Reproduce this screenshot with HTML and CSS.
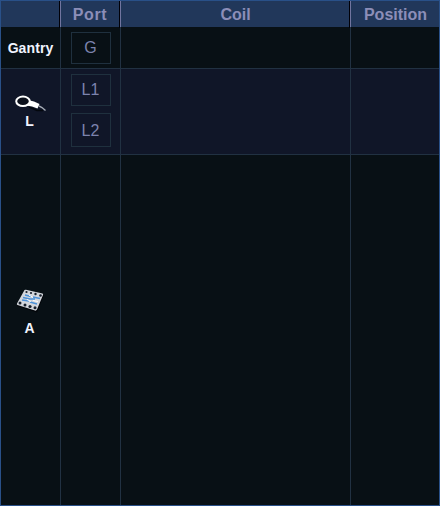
FILE: index.html
```html
<!DOCTYPE html>
<html lang="en">
<head>
<meta charset="utf-8">
<title>Coil ports</title>
<link rel="stylesheet" href="styles.css">
</head>
<body>
<main class="table">
  <div class="row header">
    <div></div><div class="short">Port</div><div>Coil</div><div>Position</div>
  </div>
  <div class="row gantry">
    <div class="label">Gantry</div>
    <div class="ports"><span class="port">G</span></div>
    <div></div><div></div>
  </div>
  <div class="row local">
    <div class="label">
      <svg class="icon" width="34" height="20" viewBox="0 0 34 20">
        <path d="M17 14 L25 17.5 L31 17.5" fill="none" stroke="#03070d" stroke-width="1.5"/>
        <path d="M16 7 L22 8.5 L27.5 11 L25.5 15.5 L20 13.5 L14 12.5Z" fill="#fff"/>
        <ellipse cx="11" cy="8.3" rx="6.8" ry="4.7" fill="#0b101b" stroke="#fff" stroke-width="2"/>
        <path d="M27 13 L30 14.5 L33.5 17.5" fill="none" stroke="#a5abb5" stroke-width="1.4"/>
      </svg>
      <span>L</span>
    </div>
    <div class="ports"><span class="port">L1</span><span class="port tall">L2</span></div>
    <div></div><div></div>
  </div>
  <div class="row array">
    <div class="label">
      <svg class="icon" width="30" height="24" viewBox="0 0 30 24">
        <path d="M9 2 L29 6 L22 23.5 L2 17Z" fill="#03060a"/>
        <path d="M9.5 1 Q10 .5 11 .7 L27.5 4.5 Q28.5 5 28 6 L22 20.5 Q21 22 20 21.5 L2.5 16 Q1.500 15.500 2 14.500Z" fill="#d3d6dc"/>
        <g fill="#18202c">
          <circle cx="11.500" cy="3" r="1.100"/><circle cx="16" cy="4" r="1.100"/><circle cx="20.500" cy="5" r="1.200"/><circle cx="25.500" cy="6.500" r="1.300"/>
          <circle cx="5" cy="14" r="1.500"/><circle cx="10" cy="16" r="1.500"/><circle cx="15" cy="17.500" r="1.600"/><circle cx="20" cy="18.800" r="1.500"/>
        </g>
        <path d="M10 6 L16 7.500 M18 8 L25 9.500 M8 8.500 L15 10 L20 10 M7 11 L14 12 M15 13 L22 15" fill="none" stroke="#4c91d8" stroke-width="1.500"/>
        <path d="M14 6 L18 8.500 M18 11.500 L23 12.500 M12 10.500 L16 12.500" stroke="#fff"/>
      </svg>
      <span>A</span>
    </div>
    <div></div><div></div><div></div>
  </div>
</main>
</body>
</html>
```
FILE: styles.css
```css
* { box-sizing: border-box; }

body {
  margin: 0;
  background: #081015;
  font-family: "Liberation Sans", Arial, sans-serif;
}

.table {
  display: grid;
  grid-template-rows: 26px 42px 86px 1fr;
  width: 440px;
  height: 506px;
  border: 1px solid #295088;
  background: #081015;
}

.row {
  display: grid;
  grid-template-columns: 59px 60px 230px 1fr;
  border-bottom: 1px solid #213142;
}

.row > div + div { border-left: 1px solid #213142; }

.header {
  border-bottom: 0;
  background: #21375a;
  color: #8c8eb8;
  font-size: 16px;
  font-weight: bold;
  line-height: 27px;
  text-align: center;
}

.header > div { padding-left: 1px; }
.header > .short { letter-spacing: 0.6px; padding-left: 0; }
.header > div:not(:last-child) { border-right: 1px solid #000008; }
.row.header > div + div { border-left-color: #71759f; }

.local { background: #101628; }
.array { border-bottom: 0; }

.label {
  display: flex;
  flex-direction: column;
  align-items: center;
  justify-content: center;
  color: #f0f4ff;
  font-size: 14px;
  font-weight: bold;
  line-height: 16px;
}

.gantry .label { padding-top: 1px; letter-spacing: 0.1px; }
.local .label { justify-content: flex-start; padding-top: 24px; }
.array .label { justify-content: flex-start; padding-top: 134px; }
.label span { margin-right: 2px; }
.local .icon { margin-right: 3px; }
.array .icon { margin-right: 2px; margin-bottom: 7px; }

.ports {
  display: flex;
  flex-direction: column;
  align-items: center;
  gap: 7px;
  padding-top: 5px;
}

.port {
  display: flex;
  align-items: center;
  justify-content: center;
  width: 40px;
  height: 32px;
  border: 1px solid #1f303e;
  color: #7c83ad;
  font-size: 16px;
}

.tall { height: 34px; padding-top: 1px; }
```
